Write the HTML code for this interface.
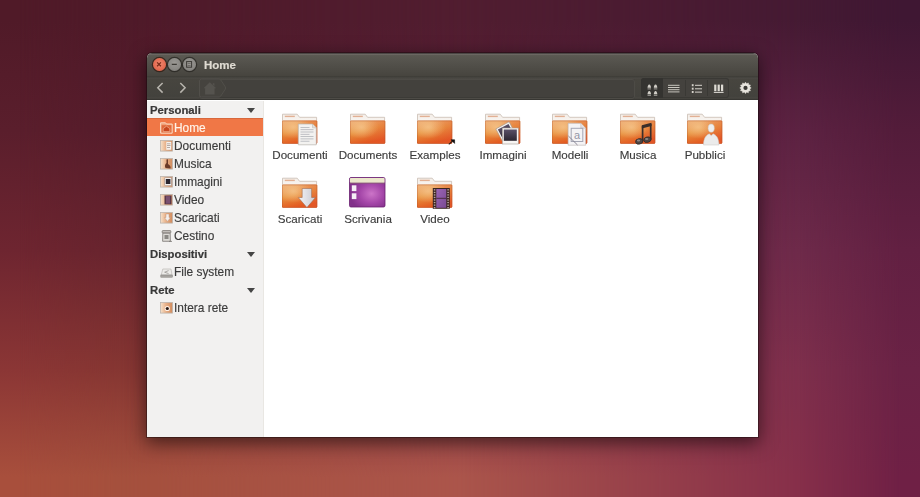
<!DOCTYPE html>
<html><head><meta charset="utf-8">
<style>
*{box-sizing:border-box;margin:0;padding:0}
html,body{width:920px;height:497px;overflow:hidden}
.lab,.si,.sh,#title{will-change:transform}
body{position:relative;font-family:"Liberation Sans",sans-serif;background:#6b2438}
.bg{position:absolute;left:0;top:0;width:920px;height:497px}
#c0{background:linear-gradient(to bottom,#501a28 20px,#5a1e2c 130px,#6e2530 250px,#8b3635 370px,#a84f3c 477px)}
#c1{background:linear-gradient(to bottom,#4f1a29 20px,#561c2b 130px,#68242e 250px,#863632 370px,#a5503d 477px);
 -webkit-mask-image:linear-gradient(to right,transparent 20px,#000 120px)}
#c2{background:linear-gradient(to bottom,#511d30 20px,#5a1f36 130px,#6b2640 250px,#853345 370px,#ab554b 477px);
 -webkit-mask-image:linear-gradient(to right,transparent 120px,#000 460px)}
#c3{background:linear-gradient(to bottom,#451a33 20px,#5c2242 130px,#6e2a4a 250px,#7e2f4c 370px,#862f4a 477px);
 -webkit-mask-image:linear-gradient(to right,transparent 460px,#000 800px)}
#c4{background:linear-gradient(to bottom,#3f1733 20px,#531c3a 130px,#622042 250px,#6a2245 370px,#6f2045 477px);
 -webkit-mask-image:linear-gradient(to right,transparent 800px,#000 900px)}

#win{position:absolute;left:147px;top:53px;width:611px;height:384px;border-radius:5px 5px 0 0;
 box-shadow:0 0 0 1px rgba(20,10,10,.4),0 5px 18px 1px rgba(0,0,0,.55);overflow:hidden;background:#fff}
#hdr{position:absolute;left:0;top:0;width:611px;height:47px;
 background:linear-gradient(to bottom,#4a4644 0px,#4a4644 0.6px,#6e6a66 1px,#6a6661 1.6px,#5b5952 2.2px,#53514b 10px,#47453f 22.5px,#3d3c37 23.8px,#4b4944 25px,#47453f 26.5px,#43423d 44px,#4a4843 45px,#383733 46.5px)}
#title{position:absolute;left:57px;top:5px;color:#dfdbd2;font-weight:bold;font-size:11.5px;line-height:14px;-webkit-text-stroke:0.2px #dfdbd2}
.wb{position:absolute;top:4.5px;width:13px;height:13px;border-radius:50%}
#close{left:5.5px;background:radial-gradient(circle at 50% 45%,#f08a72,#e66a50 60%,#cc5038 100%);box-shadow:0 0 0 1.2px rgba(50,25,15,.75)}
#min{left:21px;background:radial-gradient(circle at 50% 40%,#9a9894,#8a8884 60%,#6e6c68);box-shadow:0 0 0 1.2px rgba(35,34,30,.7)}
#max{left:36px;background:radial-gradient(circle at 50% 40%,#9a9894,#8a8884 60%,#6e6c68);box-shadow:0 0 0 1.2px rgba(35,34,30,.7)}

#path{position:absolute;left:52px;top:25.5px;width:436px;height:20px;border-radius:3px;background:#43413d;box-shadow:inset 0 0 0 1px #4d4b46,inset 0 -1px 0 1px #3c3b37}
#views{position:absolute;left:494px;top:25px;width:88px;height:20px;border-radius:3px;background:#44423e;box-shadow:inset 0 0 0 1px #3a3935}
#v1{position:absolute;left:0;top:0;width:22px;height:20px;background:#343330;border-radius:3px 0 0 3px}
.vsep{position:absolute;top:2px;width:1px;height:16px;background:#3a3935}

#side{position:absolute;left:0;top:48px;width:117px;height:336px;background:#f2f1f0;box-shadow:inset -1px 0 0 #e9e7e3}
#main{position:absolute;left:117px;top:47px;width:494px;height:337px;background:#fff}
.sh{position:absolute;left:3px;font-weight:bold;font-size:11.3px;color:#383838;line-height:14px;-webkit-text-stroke:0.2px #383838}
.tri{position:absolute;left:100px;width:0;height:0;border-left:4px solid transparent;border-right:4px solid transparent;border-top:5.6px solid #454545}
.si{position:absolute;left:27.2px;font-size:11.9px;color:#3c3c3c;line-height:14px;-webkit-text-stroke:0.15px #3c3c3c}
#sel{position:absolute;left:0;top:17px;width:116px;height:18px;background:#f07746;box-shadow:inset 0 1px 0 #d8683c}
.ic{position:absolute;left:13px;width:12px;height:11px}
.lab{position:absolute;width:80px;text-align:center;font-size:11.6px;color:#3c3c3c;line-height:14px;-webkit-text-stroke:0.15px #3c3c3c}
.fi{position:absolute;overflow:visible}
</style></head><body>
<svg width="0" height="0" style="position:absolute">
<defs>
 <linearGradient id="gF" x1="0" y1="0" x2="0.35" y2="1">
  <stop offset="0" stop-color="#eeae7a"/><stop offset="0.5" stop-color="#e8923e"/><stop offset="1" stop-color="#e2561f"/>
 </linearGradient>
 <radialGradient id="gH" cx="0.32" cy="0.28" r="0.5">
  <stop offset="0" stop-color="#f6c68e" stop-opacity=".8"/><stop offset="1" stop-color="#f6c68e" stop-opacity="0"/>
 </radialGradient>
 <linearGradient id="gB" x1="0" y1="0" x2="0" y2="1">
  <stop offset="0" stop-color="#f4eee8"/><stop offset="1" stop-color="#ffffff"/>
 </linearGradient>
 <linearGradient id="gR" x1="0" y1="0" x2="1" y2="0"><stop offset=".4" stop-color="#e4583a" stop-opacity="0"/><stop offset="1" stop-color="#e4583a" stop-opacity=".3"/></linearGradient>
 <symbol id="fold" viewBox="0 0 36 32">
  <path d="M0.5,1.2 H15.2 L17.6,4.3 H34.6 V20 H0.5 Z" fill="url(#gB)" stroke="#c9bdb2" stroke-width="0.8"/>
  <rect x="2.8" y="2.7" width="10" height="1.4" fill="#e2b094"/>
  <rect x="0" y="7.6" width="35.2" height="23.2" rx="1" fill="url(#gF)"/>
  <rect x="0" y="7.6" width="35.2" height="23.2" rx="1" fill="url(#gH)"/>
  <rect x="0" y="7.6" width="35.2" height="23.2" rx="1" fill="url(#gR)"/>
  <rect x="0.3" y="7.9" width="34.6" height="22.6" rx="1" fill="none" stroke="#b05228" stroke-opacity=".55" stroke-width="0.7"/>
 </symbol>
 <radialGradient id="gP" cx="0.62" cy="0.55" r="0.6">
  <stop offset="0" stop-color="#cc74c8"/><stop offset="0.55" stop-color="#a446a8"/><stop offset="1" stop-color="#82308a"/>
 </radialGradient>
 <linearGradient id="gPh" x1="0" y1="0" x2="0" y2="1">
  <stop offset="0" stop-color="#5a5068"/><stop offset="1" stop-color="#2c2630"/>
 </linearGradient>
 <linearGradient id="gVid" x1="0" y1="0" x2="1" y2="1">
  <stop offset="0" stop-color="#9a64b4"/><stop offset="1" stop-color="#7a4a94"/>
 </linearGradient>
 <linearGradient id="gAr" x1="0" y1="0" x2="1" y2="0">
  <stop offset="0" stop-color="#f4f4f6"/><stop offset="1" stop-color="#c8c8d0"/>
 </linearGradient>
<linearGradient id="gS" x1="0" y1="0" x2="1" y2="0"><stop offset="0" stop-color="#f6e2cc"/><stop offset=".45" stop-color="#e8b088"/><stop offset="1" stop-color="#d08a5c"/></linearGradient>
</defs>
</svg>

<div class="bg" id="c0"></div><div class="bg" id="c1"></div><div class="bg" id="c2"></div><div class="bg" id="c3"></div><div class="bg" id="c4"></div>


<div id="win">
 <div id="hdr">
  <div class="wb" id="close"></div><div class="wb" id="min"></div><div class="wb" id="max"></div>
  <div id="title">Home</div>
  <div id="path"></div>
  <div id="views"><div id="v1"></div><div class="vsep" style="left:44px"></div><div class="vsep" style="left:66px"></div></div>
 </div>
 <div id="side">
  <div class="sh" style="top:1.9px">Personali</div><div class="tri" style="top:7.1px"></div>
  <div id="sel"></div>
  <div class="si" style="top:19.8px;color:#fff4ea;-webkit-text-stroke:0.15px #fff4ea">Home</div>
  <div class="si" style="top:37.8px">Documenti</div>
  <div class="si" style="top:55.8px">Musica</div>
  <div class="si" style="top:73.8px">Immagini</div>
  <div class="si" style="top:91.8px">Video</div>
  <div class="si" style="top:109.8px">Scaricati</div>
  <div class="si" style="top:127.8px">Cestino</div>
  <div class="sh" style="top:145.9px">Dispositivi</div><div class="tri" style="top:151.3px"></div>
  <div class="si" style="top:163.8px">File system</div>
  <div class="sh" style="top:181.9px">Rete</div><div class="tri" style="top:187.3px"></div>
  <div class="si" style="top:199.8px">Intera rete</div>
 </div>
 <div id="main">
 </div>
</div>
<svg class="fi" style="left:282.3px;top:113px" width="40" height="34" viewBox="0 0 40 34"><use href="#fold" x="0" y="0" width="36" height="32"/><path d="M16.3,11 H30.5 L34.3,14.8 V31.8 H16.3 Z" fill="#f3f2f0" stroke="#b9b4ae" stroke-width=".7"/><path d="M30.5,11 V14.8 H34.3" fill="#e2e0dc" stroke="#b9b4ae" stroke-width=".5"/><rect x="18.5" y="14.0" width="9" height=".8" fill="#b2b4ba"/><rect x="18.5" y="16.3" width="13" height=".8" fill="#b2b4ba"/><rect x="18.5" y="18.6" width="13" height=".8" fill="#b2b4ba"/><rect x="18.5" y="20.9" width="9" height=".8" fill="#b2b4ba"/><rect x="18.5" y="23.2" width="13" height=".8" fill="#b2b4ba"/><rect x="18.5" y="25.5" width="13" height=".8" fill="#b2b4ba"/><rect x="18.5" y="27.8" width="9" height=".8" fill="#b2b4ba"/></svg>
<svg class="fi" style="left:349.7px;top:113px" width="40" height="34" viewBox="0 0 40 34"><use href="#fold" x="0" y="0" width="36" height="32"/></svg>
<svg class="fi" style="left:417.2px;top:113px" width="40" height="34" viewBox="0 0 40 34"><use href="#fold" x="0" y="0" width="36" height="32"/><path d="M31.8,31.4 L35.6,28" stroke="#2a1a14" stroke-width="1.1" fill="none"/><path d="M34,26.8 H37.6 V30.4 Z" fill="#111" stroke="#111" stroke-width=".6" stroke-linejoin="round"/></svg>
<svg class="fi" style="left:484.6px;top:113px" width="40" height="34" viewBox="0 0 40 34"><use href="#fold" x="0" y="0" width="36" height="32"/><g transform="rotate(-28 21 19)"><rect x="13.5" y="11.5" width="15" height="13.5" fill="#f5f2ef" stroke="#9a8f88" stroke-width=".5"/><rect x="15" y="13" width="12" height="10.5" fill="url(#gPh)"/></g><rect x="17.3" y="15" width="16" height="16" fill="#f7f5f3" stroke="#a69c95" stroke-width=".6"/><rect x="18.8" y="16.5" width="13" height="11.3" fill="url(#gPh)"/></svg>
<svg class="fi" style="left:552.0px;top:113px" width="40" height="34" viewBox="0 0 40 34"><use href="#fold" x="0" y="0" width="36" height="32"/><path d="M16.1,10.3 H28.8 L33.7,15.2 V32.2 H16.1 Z" fill="#f4f3f5" stroke="#b8b2b0" stroke-width=".6"/><path d="M28.8,10.3 V15.2 H33.7" fill="#e4e2e6" stroke="#b8b2b0" stroke-width=".5"/><rect x="19.2" y="15.3" width="11.6" height="13.2" fill="none" stroke="#a4a6b4" stroke-width="1"/><text x="25" y="26.2" font-size="11" text-anchor="middle" fill="#9496a6" font-family="Liberation Sans">a</text><path d="M16.4,23 L25.5,32" stroke="#8a8694" stroke-width="1"/></svg>
<svg class="fi" style="left:619.5px;top:113px" width="40" height="34" viewBox="0 0 40 34"><use href="#fold" x="0" y="0" width="36" height="32"/><path d="M22.6,13 V28.5 M30.7,11 V26.8" stroke="#3a2e2a" stroke-width="1.7" fill="none"/><path d="M21.8,12.2 L31.5,9.8 V13 L21.8,15.4 Z" fill="#3a2e2a"/><ellipse cx="19.2" cy="28.4" rx="3.7" ry="2.7" fill="#4e4644" stroke="#2c2422" stroke-width=".7" transform="rotate(-15 19.2 28.4)"/><ellipse cx="27.4" cy="26.7" rx="3.7" ry="2.7" fill="#4e4644" stroke="#2c2422" stroke-width=".7" transform="rotate(-15 27.4 26.7)"/><ellipse cx="18.5" cy="27.6" rx="1.7" ry="1" fill="#8e8684"/><ellipse cx="26.7" cy="25.9" rx="1.7" ry="1" fill="#8e8684"/></svg>
<svg class="fi" style="left:686.9px;top:113px" width="40" height="34" viewBox="0 0 40 34"><use href="#fold" x="0" y="0" width="36" height="32"/><ellipse cx="24.2" cy="15.2" rx="3.1" ry="4.1" fill="#eeeeee" stroke="#c9c4c0" stroke-width=".5"/><path d="M16.5,32 C16.5,25 19.5,21.8 22.3,20.8 L24.2,22.6 L26.1,20.8 C29,21.8 32,25 32,32 Z" fill="#ebebeb" stroke="#c9c4c0" stroke-width=".5"/></svg>
<svg class="fi" style="left:282.3px;top:177px" width="40" height="34" viewBox="0 0 40 34"><use href="#fold" x="0" y="0" width="36" height="32"/><path d="M20.2,11.5 H29.6 V20.5 H33.5 L24.9,30.5 L16.3,20.5 H20.2 Z" fill="url(#gAr)" stroke="#9a6a50" stroke-width=".8" stroke-opacity=".7"/></svg>
<svg class="fi" style="left:349.1px;top:177px" width="40" height="34" viewBox="0 0 40 34"><rect x="0.5" y="0.5" width="35.5" height="29.5" rx="1.5" fill="url(#gP)" stroke="#6a2070" stroke-width=".8"/><rect x="0.9" y="0.9" width="34.7" height="5" rx="1" fill="#ebe7cb"/><rect x="0.9" y="5.6" width="34.7" height="1" fill="#8a5a78"/><rect x="2.8" y="8.3" width="4.6" height="5.8" fill="#f6eef6"/><rect x="2.8" y="16.3" width="4.6" height="5.8" fill="#f6eef6"/></svg>
<svg class="fi" style="left:417.2px;top:177px" width="40" height="34" viewBox="0 0 40 34"><use href="#fold" x="0" y="0" width="36" height="32"/><rect x="15.8" y="11" width="17" height="20.8" fill="#3a2420"/><rect x="19.3" y="12" width="10" height="18.8" fill="url(#gVid)"/><rect x="19.3" y="20.8" width="10" height="1" fill="#4a2c40"/><rect x="16.8" y="12.2" width="1.6" height="1.3" fill="#b8a8a0"/><rect x="30.3" y="12.2" width="1.6" height="1.3" fill="#b8a8a0"/><rect x="16.8" y="14.8" width="1.6" height="1.3" fill="#b8a8a0"/><rect x="30.3" y="14.8" width="1.6" height="1.3" fill="#b8a8a0"/><rect x="16.8" y="17.3" width="1.6" height="1.3" fill="#b8a8a0"/><rect x="30.3" y="17.3" width="1.6" height="1.3" fill="#b8a8a0"/><rect x="16.8" y="19.8" width="1.6" height="1.3" fill="#b8a8a0"/><rect x="30.3" y="19.8" width="1.6" height="1.3" fill="#b8a8a0"/><rect x="16.8" y="22.4" width="1.6" height="1.3" fill="#b8a8a0"/><rect x="30.3" y="22.4" width="1.6" height="1.3" fill="#b8a8a0"/><rect x="16.8" y="24.9" width="1.6" height="1.3" fill="#b8a8a0"/><rect x="30.3" y="24.9" width="1.6" height="1.3" fill="#b8a8a0"/><rect x="16.8" y="27.5" width="1.6" height="1.3" fill="#b8a8a0"/><rect x="30.3" y="27.5" width="1.6" height="1.3" fill="#b8a8a0"/><rect x="16.8" y="30.0" width="1.6" height="1.3" fill="#b8a8a0"/><rect x="30.3" y="30.0" width="1.6" height="1.3" fill="#b8a8a0"/></svg>
<div class="lab" style="left:260.3px;top:147.7px">Documenti</div><div class="lab" style="left:327.7px;top:147.7px">Documents</div><div class="lab" style="left:395.2px;top:147.7px">Examples</div><div class="lab" style="left:462.6px;top:147.7px">Immagini</div><div class="lab" style="left:530.0px;top:147.7px">Modelli</div><div class="lab" style="left:597.5px;top:147.7px">Musica</div><div class="lab" style="left:664.9px;top:147.7px">Pubblici</div><div class="lab" style="left:260.3px;top:211.5px">Scaricati</div><div class="lab" style="left:327.7px;top:211.5px">Scrivania</div><div class="lab" style="left:395.2px;top:211.5px">Video</div>
<svg class="fi" style="left:159.5px;top:121.9px" width="13" height="12" viewBox="0 0 13 12"><path d="M0.6,0.8 H5.5 L6.5,2 H12.2 V11.2 H0.6 Z" fill="#f0a078" stroke="#fbe2cc" stroke-width=".9"/><rect x="1.6" y="3.2" width="9.8" height="7.2" fill="#e0683a"/><path d="M3.2,9.6 V6.6 L6.5,4.2 L9.8,6.6 V9.6 Z" fill="#c8461e" stroke="#f6c8a8" stroke-width=".6"/></svg>
<svg class="fi" style="left:159.5px;top:139.9px" width="13" height="12" viewBox="0 0 13 12"><rect x="0.5" y="0.5" width="12" height="10.6" fill="url(#gS)" stroke="#bdb5ad" stroke-width=".8"/><rect x="6.3" y="1.8" width="5" height="8" fill="#f6f2ee"/><rect x="7" y="3.5" width="3.5" height=".7" fill="#9a8c86"/><rect x="7" y="5.3" width="3.5" height=".7" fill="#9a8c86"/><rect x="7" y="7.1" width="3" height=".7" fill="#9a8c86"/></svg>
<svg class="fi" style="left:159.5px;top:157.9px" width="13" height="12" viewBox="0 0 13 12"><rect x="0.5" y="0.5" width="12" height="10.6" fill="url(#gS)" stroke="#bdb5ad" stroke-width=".8"/><path d="M5.5,10 C4.5,8 5,6 6.5,5 V1.5 L8,1.2 V6 C10,7 11,9 10.5,10.5 Z" fill="#6a3a28"/></svg>
<svg class="fi" style="left:159.5px;top:175.9px" width="13" height="12" viewBox="0 0 13 12"><rect x="0.5" y="0.5" width="12" height="10.6" fill="url(#gS)" stroke="#bdb5ad" stroke-width=".8"/><rect x="4.8" y="1.8" width="6.6" height="7.8" fill="#f4f2f0" stroke="#9a9090" stroke-width=".5"/><rect x="5.8" y="3" width="4.6" height="5" fill="#2a2630"/></svg>
<svg class="fi" style="left:159.5px;top:193.9px" width="13" height="12" viewBox="0 0 13 12"><rect x="0.5" y="0.5" width="12" height="10.6" fill="url(#gS)" stroke="#bdb5ad" stroke-width=".8"/><rect x="4.5" y="1.5" width="7" height="8.8" fill="#5a3848"/><rect x="6" y="2.2" width="4" height="7.4" fill="#7a5070"/></svg>
<svg class="fi" style="left:159.5px;top:211.9px" width="13" height="12" viewBox="0 0 13 12"><rect x="0.5" y="0.5" width="12" height="10.6" fill="url(#gS)" stroke="#bdb5ad" stroke-width=".8"/><path d="M6,2 H9 V5.5 H10.6 L7.5,9.4 L4.4,5.5 H6 Z" fill="#f4efec" stroke="#b88a70" stroke-width=".4"/></svg>
<svg class="fi" style="left:159.5px;top:229.7px" width="13" height="12" viewBox="0 0 13 12"><rect x="2.2" y="0.6" width="8.6" height="2.4" rx=".6" fill="#c8c5c0" stroke="#6a6662" stroke-width=".7"/><path d="M2.8,3.2 H10.2 L10.4,11.3 H2.6 Z" fill="#dcdad6" stroke="#6a6662" stroke-width=".7"/><path d="M4.5,5 H8.5 V9 H4.5 Z" fill="#8a8884"/><path d="M9,11.4 H12" stroke="#7a7672" stroke-width=".8"/></svg>
<svg class="fi" style="left:159.5px;top:266.9px" width="13" height="12" viewBox="0 0 13 12"><path d="M1.2,8 L2.8,2 H11 L12,8 Z" fill="#ecebe8" stroke="#b2afab" stroke-width=".6"/><path d="M8.6,3.6 L4.6,5.2 L8.6,6.6" fill="none" stroke="#9c9995" stroke-width=".8"/><rect x="0.8" y="8" width="11.6" height="2.2" fill="#a8a5a1" stroke="#7e7b77" stroke-width=".5"/></svg>
<svg class="fi" style="left:159.5px;top:301.9px" width="13" height="12" viewBox="0 0 13 12"><rect x="0.5" y="0.5" width="12" height="10.6" fill="url(#gS)" stroke="#bdb5ad" stroke-width=".8"/><circle cx="7.3" cy="6.5" r="2.6" fill="#fff2e8"/><circle cx="7.3" cy="6.5" r="1.6" fill="#2a1a14"/></svg>

<svg class="fi" style="left:150px;top:78px" width="50" height="20" viewBox="0 0 50 20">
 <path d="M12.6,5 L7.8,9.8 L12.6,14.6" fill="none" stroke="#b8b5ae" stroke-width="1.5"/>
 <path d="M30.3,5 L35.1,9.8 L30.3,14.6" fill="none" stroke="#b8b5ae" stroke-width="1.5"/>
</svg>
<svg class="fi" style="left:198px;top:78px" width="30" height="21" viewBox="0 0 30 21">
 <path d="M3.5,1 H21 Q22,1 22.8,2 L27.4,9 Q28,10 27.4,11 L22.8,18 Q22,19 21,19 H3.5 Q1.5,19 1.5,17 V3 Q1.5,1 3.5,1 Z" fill="#45433e" stroke="#514f4a" stroke-width="1"/>
 <path d="M5.5,10.2 L11.8,4.2 L18.2,10.2 H16.6 V16.4 H7.1 V10.2 Z M14.8,5.2 H16.4 V8 L14.8,6.6 Z" fill="#55534e"/>
</svg>
<svg class="fi" style="left:641px;top:78px" width="90" height="20" viewBox="0 0 90 20">
 <g fill="#d0cdc6">
<path d="M8.25,6.6 C9.40,6.6 10.00,8.80 10.00,9.80 H6.50 C6.50,8.80 7.10,6.6 8.25,6.6 Z"/><rect x="6.5" y="10.40" width="3.5" height="1" opacity=".7"/><path d="M14.55,6.6 C15.70,6.6 16.30,8.80 16.30,9.80 H12.80 C12.80,8.80 13.40,6.6 14.55,6.6 Z"/><rect x="12.8" y="10.40" width="3.5" height="1" opacity=".7"/><path d="M8.25,13 C9.40,13 10.00,15.20 10.00,16.20 H6.50 C6.50,15.20 7.10,13 8.25,13 Z"/><rect x="6.5" y="16.80" width="3.5" height="1" opacity=".7"/><path d="M14.55,13 C15.70,13 16.30,15.20 16.30,16.20 H12.80 C12.80,15.20 13.40,13 14.55,13 Z"/><rect x="12.8" y="16.80" width="3.5" height="1" opacity=".7"/>
 </g>
 <g fill="#c9c6bf">
  <rect x="27" y="6.8" width="11.5" height="1"/><rect x="27" y="9" width="11.5" height="1"/><rect x="27" y="11.2" width="11.5" height="1"/><rect x="27" y="13.4" width="11.5" height="1"/>
 </g>
 <g fill="#d6d3cc">
  <rect x="50.8" y="6.2" width="1.8" height="2"/><rect x="50.8" y="9.7" width="1.8" height="2"/><rect x="50.8" y="13" width="1.8" height="2"/>
  <rect x="54" y="6.8" width="7" height="1"/><rect x="54" y="10.3" width="7" height="1"/><rect x="54" y="13.6" width="7" height="1"/>
 </g>
 <g fill="#dedbd4">
  <rect x="73.2" y="6.6" width="2.2" height="6.6"/><rect x="76.6" y="6.6" width="2.2" height="6.6"/><rect x="80" y="6.6" width="2.2" height="6.6"/>
  <rect x="72.8" y="13.9" width="9.8" height="1"/>
 </g>
</svg>
<svg class="fi" style="left:738px;top:80px" width="16" height="16" viewBox="0 0 16 16"><polygon points="7.50,2.20 8.61,3.75 10.35,2.96 10.54,4.86 12.44,5.05 11.65,6.79 13.20,7.90 11.65,9.01 12.44,10.75 10.54,10.94 10.35,12.84 8.61,12.05 7.50,13.60 6.39,12.05 4.65,12.84 4.46,10.94 2.56,10.75 3.35,9.01 1.80,7.90 3.35,6.79 2.56,5.05 4.46,4.86 4.65,2.96 6.39,3.75" fill="#e8e5de" stroke="#e8e5de" stroke-width=".5" stroke-linejoin="round"/><circle cx="7.5" cy="7.9" r="2.1" fill="#3a3935"/></svg>
<svg class="fi" style="left:150px;top:56px" width="48" height="17" viewBox="0 0 48 17">
 <path d="M7.1,6.4 L10.9,10.2 M10.9,6.4 L7.1,10.2" stroke="#7a2a18" stroke-width="1.3"/>
 <rect x="21.8" y="7.6" width="5" height="1.4" fill="#3c3a36"/><rect x="21.8" y="6.8" width="5" height=".6" fill="#b0aea8" opacity=".6"/>
 <rect x="36.6" y="5.6" width="5" height="5.6" fill="none" stroke="#3c3a36" stroke-width="1"/><rect x="37.6" y="7.3" width="3" height=".6" fill="#55534e"/><rect x="37.6" y="9" width="3" height=".6" fill="#55534e"/>
</svg>

</body></html>
